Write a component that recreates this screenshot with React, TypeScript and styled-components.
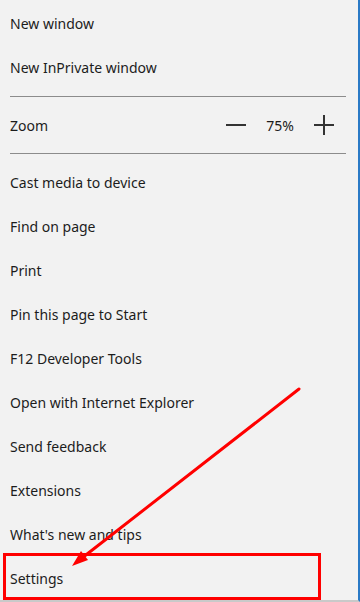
import React from 'react';
import styled, { createGlobalStyle } from 'styled-components';

const GlobalStyle = createGlobalStyle`
  html, body {
    margin: 0;
    padding: 0;
    background: #f2f2f2;
  }
  body {
    font-family: 'Noto Sans', 'Open Sans', sans-serif;
  }
`;

const topItems = ['New window', 'New InPrivate window'];
const bottomItems = [
  'Cast media to device',
  'Find on page',
  'Print',
  'Pin this page to Start',
  'F12 Developer Tools',
  'Open with Internet Explorer',
  'Send feedback',
  'Extensions',
  "What's new and tips",
];

export default function App() {
  return (
    <>
      <GlobalStyle />
      <Menu>
        <Group>
          {topItems.map((label) => (
            <MenuItem key={label}>{label}</MenuItem>
          ))}
        </Group>
        <Separator $top={7} />
        <ZoomRow>
          <ZoomLabel>Zoom</ZoomLabel>
          <ZoomControls>
            <ZoomButton aria-label='Zoom out'>
              <svg width='20' height='20' viewBox='0 0 20 20'>
                <path d='M0 10h20' stroke='#333' strokeWidth='2' />
              </svg>
            </ZoomButton>
            <ZoomValue>75%</ZoomValue>
            <ZoomButton aria-label='Zoom in'>
              <svg width='20' height='20' viewBox='0 0 20 20'>
                <path d='M0 10h20M10 0v20' stroke='#333' strokeWidth='2' />
              </svg>
            </ZoomButton>
          </ZoomControls>
        </ZoomRow>
        <Separator />
        <Group $top={6}>
          {bottomItems.map((label) => (
            <MenuItem key={label}>{label}</MenuItem>
          ))}
          <MenuItem $highlighted>Settings</MenuItem>
        </Group>
        <Annotation width='360' height='602' viewBox='0 0 360 602'>
          <line
            x1='299'
            y1='389'
            x2='82'
            y2='558'
            stroke='#ff0000'
            strokeWidth='3'
            strokeLinecap='round'
          />
          <polygon points='72,566 88,560 81,551' fill='#ff0000' />
        </Annotation>
      </Menu>
    </>
  );
}

const Menu = styled.div`
  position: relative;
  width: 360px;
  height: 602px;
  box-sizing: border-box;
  padding-top: 1px;
  background: #f2f2f2;
  border-right: 2px solid #2a7ac6;
  border-bottom: 2px solid #c9c9c9;
  overflow: hidden;
  color: #1c1c1c;
`;

const Group = styled.div<{ $top?: number }>`
  display: flex;
  flex-direction: column;
  margin-top: ${(props) => props.$top || 0}px;
`;

const MenuItem = styled.div<{ $highlighted?: boolean }>`
  position: relative;
  height: 44px;
  display: flex;
  align-items: center;
  padding-left: 10px;
  font-size: 14px;

  ${(props) =>
    props.$highlighted &&
    `
    &::after {
      content: '';
      position: absolute;
      left: 3px;
      top: -3px;
      width: 312px;
      height: 41px;
      border: 3px solid #ff0000;
    }
  `}
`;

const Separator = styled.div<{ $top?: number }>`
  height: 1px;
  margin: ${(props) => props.$top || 0}px 12px 0 10px;
  background: #8c8c8c;
`;

const ZoomRow = styled.div`
  height: 56px;
  display: flex;
  align-items: center;
  justify-content: space-between;
  padding: 0 24px 0 10px;
`;

const ZoomLabel = styled.span`
  font-size: 14px;
`;

const ZoomControls = styled.div`
  display: flex;
  align-items: center;
  gap: 18px;
`;

const ZoomButton = styled.div`
  display: flex;
  width: 20px;
  height: 20px;
`;

const ZoomValue = styled.span`
  font-size: 14px;
  width: 32px;
  text-align: center;
`;

const Annotation = styled.svg`
  position: absolute;
  left: 0;
  top: 0;
  pointer-events: none;
`;
